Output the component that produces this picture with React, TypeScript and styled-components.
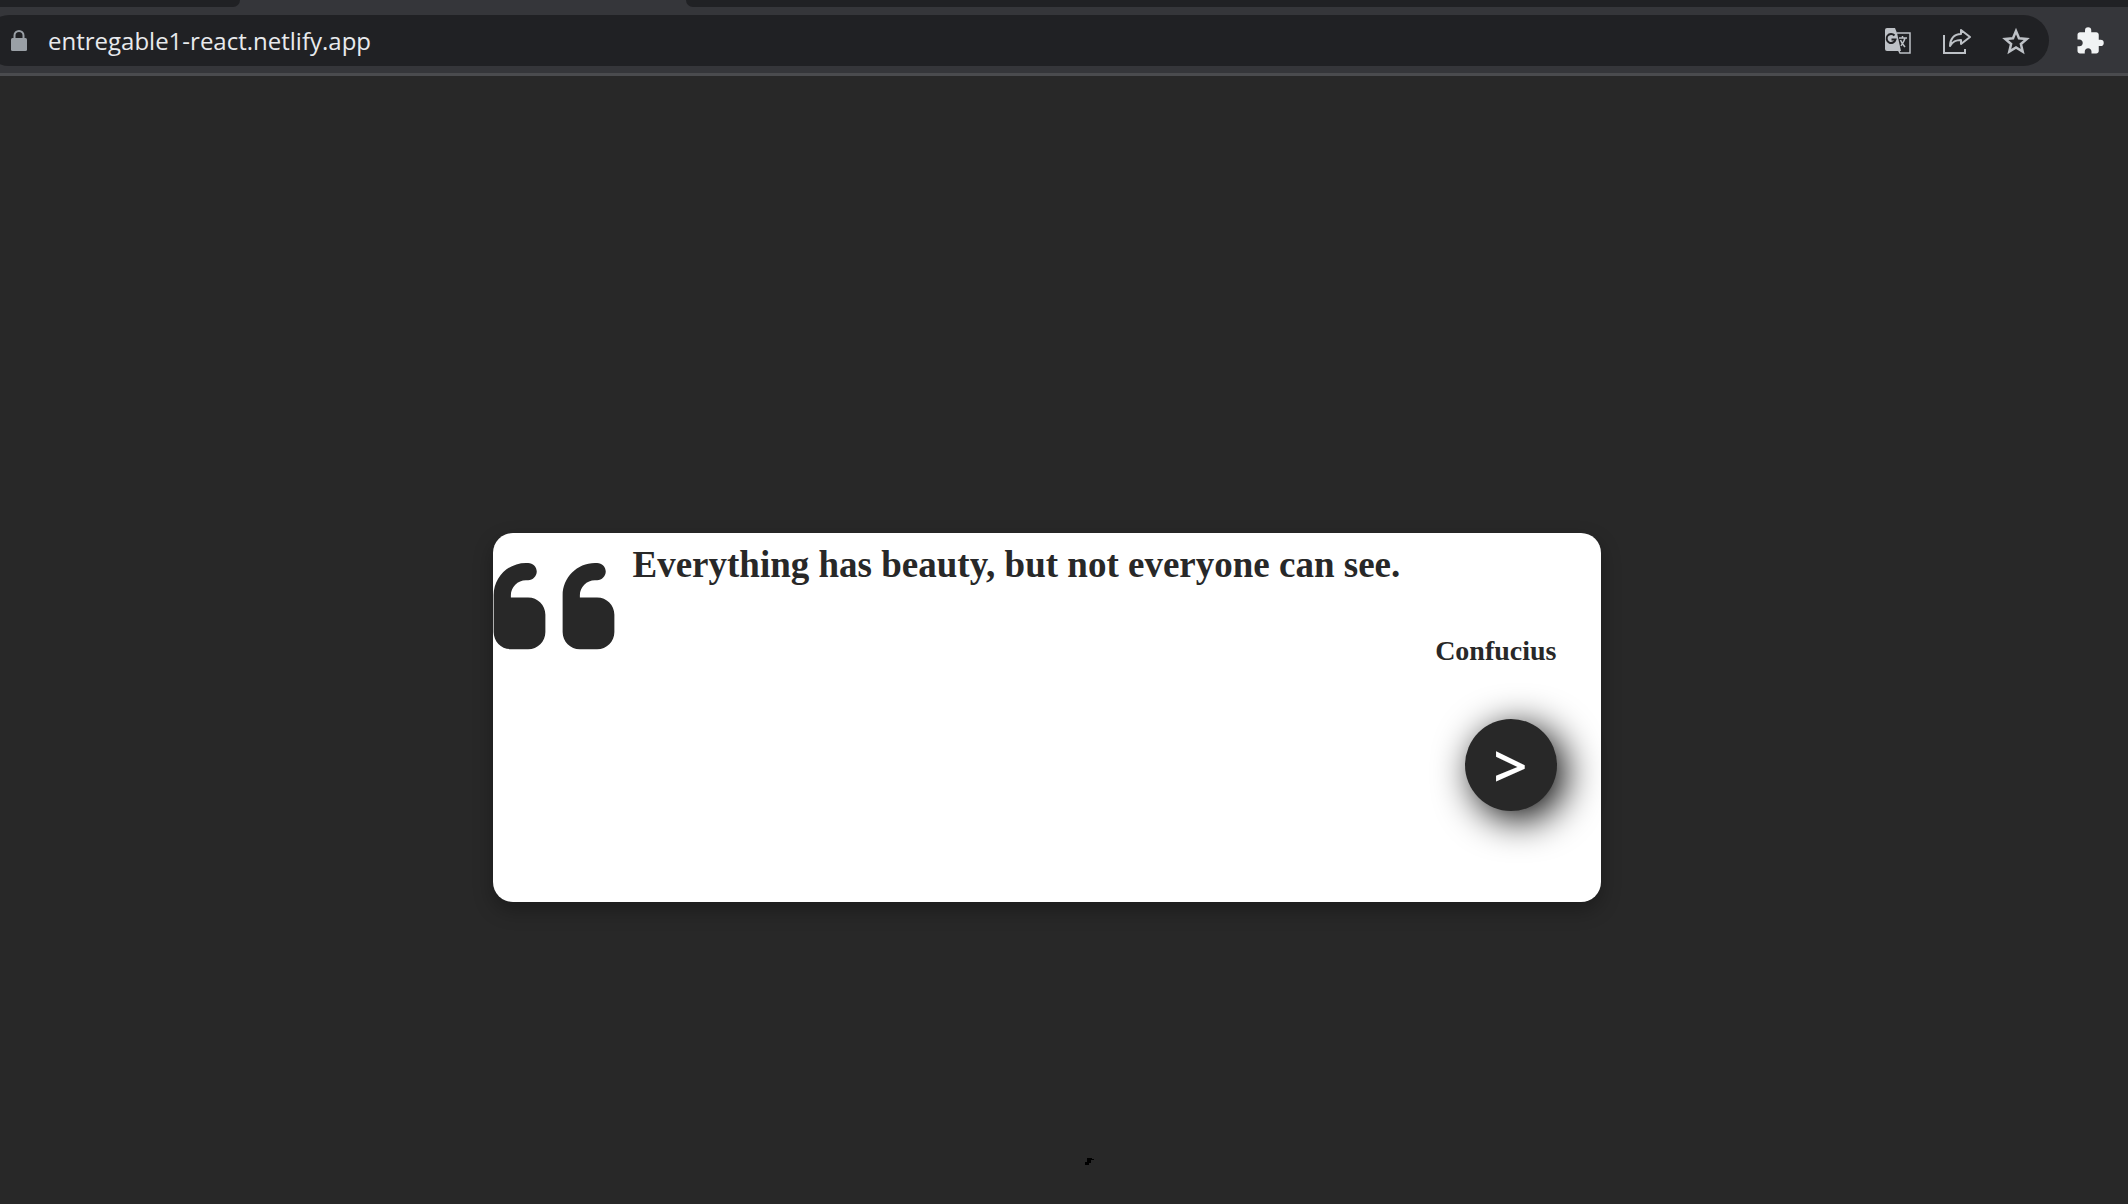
import React, { useState } from "react";
import styled, { createGlobalStyle } from "styled-components";
import { FaQuoteLeft } from "react-icons/fa6";
import { MdExtension } from "react-icons/md";

const GlobalStyle = createGlobalStyle`
  *, *::before, *::after { box-sizing: border-box; }
  body { margin: 0; background: #282828; }
  button, input { font: inherit; color: inherit; border: 0; padding: 0; background: none; }
`;

const Window = styled.div`
  display: flex;
  flex-direction: column;
  min-height: 100vh;
  overflow: hidden;
`;

const TabStrip = styled.div`
  display: flex;
  justify-content: space-between;
  height: 7px;
  background: #35363a;
`;

const TabGap = styled.div<{ $side: "left" | "right" }>`
  background: #202124;
  flex: ${(p) => (p.$side === "left" ? "0 0 240px" : "1")};
  margin-left: ${(p) => (p.$side === "left" ? "0" : "446px")};
  border-radius: ${(p) => (p.$side === "left" ? "0 0 12px 0" : "0 0 0 12px")};
`;

const Toolbar = styled.header`
  display: flex;
  align-items: center;
  gap: 26px;
  height: 69px;
  padding: 8px 25px 7px 0;
  background: #35363a;
  border-bottom: 3px solid #4a4b4e;
`;

const Omnibox = styled.div`
  display: flex;
  flex: 1;
  align-items: center;
  gap: 20px;
  height: 51px;
  margin-left: -16px;
  padding: 0 19px 0 26px;
  border-radius: 26px;
  background: #202124;
  color: #9aa0a6;
`;

const Address = styled.input`
  flex: 1;
  min-width: 0;
  height: 36px;
  outline: none;
  color: #e8eaed;
  font-family: "Open Sans", "Noto Sans", sans-serif;
  font-size: 24px;
`;

const Actions = styled.div`
  display: flex;
  gap: 31px;
`;

const IconButton = styled.button<{ $bright?: boolean }>`
  display: grid;
  place-items: center;
  width: 28px;
  height: 32px;
  color: ${(p) => (p.$bright ? "#f1f3f4" : "#bdc1c6")};
`;

const Stage = styled.main`
  display: flex;
  flex: 1;
  align-items: center;
  justify-content: center;
  padding: 155px 35px 0 0;
`;

const Card = styled.article`
  display: flex;
  align-items: flex-start;
  gap: 18px;
  width: 100%;
  max-width: 1108px;
  min-height: 369px;
  padding: 4px 44px 36px 0;
  border-radius: 20px;
  background: #fff;
  color: #282828;
  box-shadow: 0 8px 20px rgba(0, 0, 0, 0.3);
`;

const QuoteMark = styled(FaQuoteLeft)`
  flex: none;
  width: 122px;
  height: 138px;
`;

const Body = styled.div`
  display: flex;
  flex: 1;
  flex-direction: column;
  align-items: flex-end;
  font-family: "Liberation Serif", serif;
  font-weight: 700;
`;

const Quote = styled.h1`
  align-self: stretch;
  margin: 7px 0 45px;
  font-size: 37px;
  line-height: 42px;
`;

const Author = styled.h2`
  margin: 0 0 48px;
  font-size: 28px;
  line-height: 40px;
`;

const NextButton = styled.button`
  width: 92px;
  height: 92px;
  border-radius: 50%;
  background: #282828;
  color: #fff;
  font-family: "Open Sans", "Noto Sans", sans-serif;
  font-size: 60px;
  font-weight: 600;
  line-height: 92px;
  text-align: center;
  box-shadow: 8px 8px 38px #000;
`;

const Speck = styled.svg`
  position: absolute;
  left: 51%;
  bottom: 39px;
`;

const quotes = [{ text: "Everything has beauty, but not everyone can see.", author: "Confucius" }];

function LockIcon() {
  return (
    <svg width="18" height="24" viewBox="0 0 18 24">
      <rect x="1" y="9" width="16" height="13" rx="1.500" fill="currentColor" />
      <path d="M4.500 10V6.500a4.500 4.500 0 0 1 9 0V10" fill="none" stroke="currentColor" strokeWidth="2" />
    </svg>
  );
}

function TranslateIcon() {
  return (
    <svg width="28" height="28" viewBox="0 0 28 28" fill="none">
      <path d="M13 6h13v20H16l-2-4" stroke="currentColor" strokeWidth="1.500" />
      <path d="M3 1h8l2 5 4 18H3a2 2 0 0 1-2-2V3a2 2 0 0 1 2-2z" fill="currentColor" />
      <path d="M10.500 8.500a4.500 4.500 0 1 0 1 4H7.500" stroke="#202124" strokeWidth="2" />
      <path d="M15 11h8M18.500 9v2M21 11c-1 4-3 6-4 8M16.500 13c1 3 3 5 4.500 7" stroke="currentColor" strokeWidth="1.500" />
    </svg>
  );
}

function ShareIcon() {
  return (
    <svg width="28" height="28" viewBox="0 0 28 28" fill="none" stroke="currentColor" strokeWidth="2">
      <path d="M1 8v18h21v-4" />
      <path d="M18 3l9 7-9 7v-4c-5 0-8 1-11 6 0-7 4-12 11-12z" strokeLinejoin="round" />
    </svg>
  );
}

function StarIcon() {
  return (
    <svg width="28" height="28" viewBox="0 0 28 28" fill="none" stroke="currentColor" strokeWidth="2.500">
      <path d="M14 4l3 7.200 7.800.7-5.900 5.100 1.800 7.600L14 20.500l-6.700 4.100L9.100 17l-5.900-5.100 7.800-.7z" />
    </svg>
  );
}

export default function App() {
  const [index, setIndex] = useState(0);
  const quote = quotes[index];
  return (
    <Window>
      <GlobalStyle />
      <TabStrip>
        <TabGap $side="left" />
        <TabGap $side="right" />
      </TabStrip>
      <Toolbar>
        <Omnibox>
          <LockIcon />
          <Address aria-label="Address" defaultValue="entregable1-react.netlify.app" />
          <Actions>
            <IconButton aria-label="Translate"><TranslateIcon /></IconButton>
            <IconButton aria-label="Share"><ShareIcon /></IconButton>
            <IconButton aria-label="Bookmark"><StarIcon /></IconButton>
          </Actions>
        </Omnibox>
        <IconButton $bright aria-label="Extensions"><MdExtension size={30} /></IconButton>
      </Toolbar>
      <Stage>
        <Card>
          <QuoteMark />
          <Body>
            <Quote>{quote.text}</Quote>
            <Author>{quote.author}</Author>
            <NextButton aria-label="Next quote" onClick={() => setIndex((index + 1) % quotes.length)}>
              &gt;
            </NextButton>
          </Body>
        </Card>
      </Stage>
      <Speck width="9" height="8" viewBox="0 0 9 8">
        <path d="M2 1h5v1h2v1H6v3H4v2H0V5h2z" fill="#000" />
      </Speck>
    </Window>
  );
}
